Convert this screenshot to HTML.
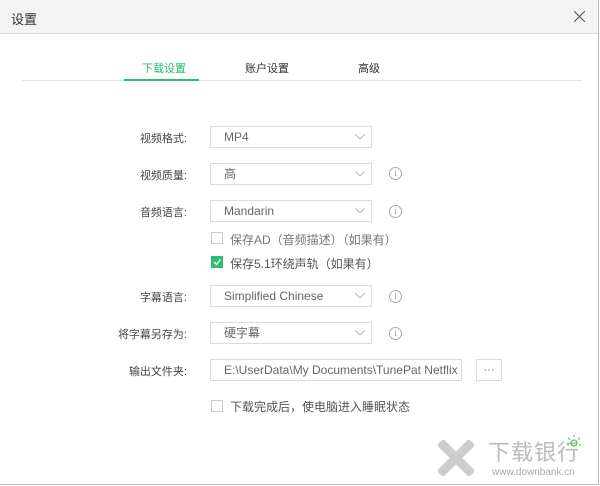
<!DOCTYPE html><html><head><meta charset="utf-8"><style>
body{margin:0;width:600px;height:486px;background:#fff;font-family:"Liberation Sans","Noto Sans CJK SC",sans-serif;position:relative;overflow:hidden;color:#333}
.a{position:absolute}
.win{left:0;top:0;width:598px;height:484px;border:1px solid #bbb;border-top:none;border-left:none}
.tb{left:0;top:0;width:599px;height:33px;background:#f3f3f3;border-bottom:1px solid #ddd}
.lbl{font-size:11px;color:#444;text-align:right;width:150px;left:37px}
.sel{left:210px;font-size:12px;color:#666;line-height:21px;padding-left:13px;box-sizing:border-box;width:162px;height:22px;border:1px solid #dcdcdc}
.sel svg{position:absolute;right:6px;top:7px}
.info{width:11px;height:11px;border:1px solid #aaa;border-radius:50%;font-size:9px;line-height:11px;text-align:center;color:#999;left:389px;font-family:"Liberation Serif",serif}
.cb{width:10px;height:10px;border:1px solid #ccc;left:211px;background:#fff}
.ct{font-size:12px;color:#555;left:230px}
</style></head><body>
<div class="a tb"></div>
<div class="a win"></div>
<div class="a" style="left:11px;top:9px;font-size:13px;color:#333">设置</div>
<svg class="a" style="left:574px;top:11px" width="11" height="11"><path d="M0 0L11 11M11 0L0 11" stroke="#555" stroke-width="1.1"/></svg>
<div class="a" style="left:22px;top:80px;width:560px;height:1px;background:#e2e2e6"></div>
<div class="a" style="left:124px;top:79px;width:75px;height:2px;background:#2dbd72"></div>
<div class="a" style="left:142px;top:60px;font-size:11px;color:#2dbd72">下载设置</div>
<div class="a" style="left:245px;top:60px;font-size:11px;color:#333">账户设置</div>
<div class="a" style="left:358px;top:60px;font-size:11px;color:#333">高级</div>

<div class="a lbl" style="top:130px">视频格式:</div>
<div class="a sel" style="top:126px">MP4<svg width="10" height="6"><path d="M0 0L5 5L10 0" fill="none" stroke="#bbb"/></svg></div>
<div class="a lbl" style="top:167px">视频质量:</div>
<div class="a sel" style="top:163px">高<svg width="10" height="6"><path d="M0 0L5 5L10 0" fill="none" stroke="#bbb"/></svg></div>
<div class="a info" style="top:167px">i</div>
<div class="a lbl" style="top:204px">音频语言:</div>
<div class="a sel" style="top:200px">Mandarin<svg width="10" height="6"><path d="M0 0L5 5L10 0" fill="none" stroke="#bbb"/></svg></div>
<div class="a info" style="top:205px">i</div>
<div class="a cb" style="top:232px"></div>
<div class="a ct" style="top:231px;color:#777">保存AD（音频描述）（如果有）</div>
<div class="a cb" style="top:256px;background:#2dbd72;border-color:#2dbd72"><svg class="a" style="left:1px;top:1px" width="8" height="8"><path d="M1 4L3.5 6.5L7.5 1.5" fill="none" stroke="#fff" stroke-width="1.3"/></svg></div>
<div class="a ct" style="top:255px">保存5.1环绕声轨（如果有）</div>
<div class="a lbl" style="top:289px">字幕语言:</div>
<div class="a sel" style="top:285px">Simplified Chinese<svg width="10" height="6"><path d="M0 0L5 5L10 0" fill="none" stroke="#bbb"/></svg></div>
<div class="a info" style="top:290px">i</div>
<div class="a lbl" style="top:326px">将字幕另存为:</div>
<div class="a sel" style="top:322px">硬字幕<svg width="10" height="6"><path d="M0 0L5 5L10 0" fill="none" stroke="#bbb"/></svg></div>
<div class="a info" style="top:327px">i</div>
<div class="a lbl" style="top:363px">输出文件夹:</div>
<div class="a sel" style="top:359px;width:252px;white-space:nowrap;overflow:hidden">E:\UserData\My Documents\TunePat Netflix '</div>
<div class="a" style="left:476px;top:359px;width:26px;height:22px;border:1px solid #dcdcdc;box-sizing:border-box;font-size:11px;color:#666;text-align:center;line-height:20px">···</div>
<div class="a cb" style="top:400px"></div>
<div class="a ct" style="top:398px">下载完成后，使电脑进入睡眠状态</div>

<svg class="a" style="left:438px;top:440px" width="36" height="36"><path d="M2 2L34 34M34 2L2 34" stroke="#ccc" stroke-width="9"/></svg>
<div class="a" style="left:488px;top:440px;font-size:22px;color:#bbb;letter-spacing:1px;line-height:26px">下载银行</div>
<div class="a" style="left:492px;top:467px;font-size:10px;color:#aaa">www.downbank.cn</div>
<svg class="a" style="left:566px;top:434px" width="16" height="14"><circle cx="8" cy="9" r="3" fill="none" stroke="#5c5" stroke-width="1.3"/><path d="M8 1V3M2 4L4 5.5M14 4L12 5.5M1 11H3M13 11H15" stroke="#5c5" stroke-width="1.2"/></svg>
</body></html>
